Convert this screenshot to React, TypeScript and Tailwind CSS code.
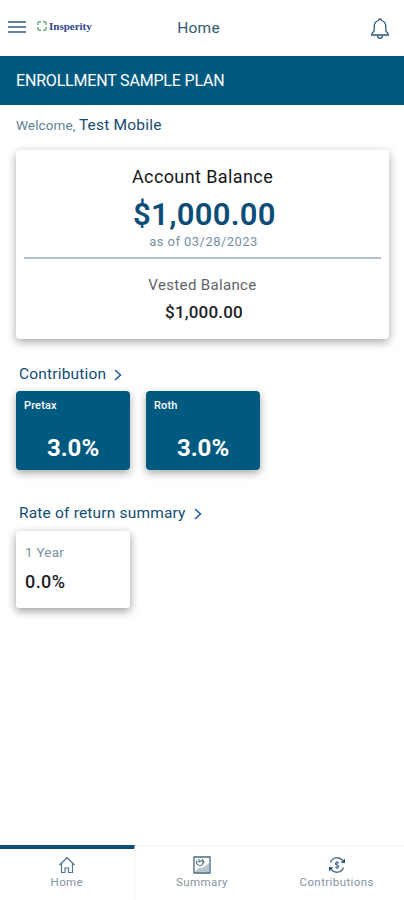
import type { ReactNode } from "react";

type Tab = {
  label: string;
  icon: ReactNode;
  active?: boolean;
};

const contributions = [
  { label: "Pretax", value: "3.0%" },
  { label: "Roth", value: "3.0%" },
];

const tabs: Tab[] = [
  { label: "Home", icon: <HomeIcon />, active: true },
  { label: "Summary", icon: <SummaryIcon /> },
  { label: "Contributions", icon: <ContributionsIcon /> },
];

function HomeIcon() {
  return (
    <svg width="18" height="18" viewBox="0 0 18 18" fill="none" stroke="#53778f" strokeWidth="1.2" aria-hidden="true">
      <path d="M1.500 9 9 1.700 16.500 9M3.500 7.500v9H7v-4.500h3.500v4.500h4v-9" />
    </svg>
  );
}

function SummaryIcon() {
  return (
    <svg width="18" height="18" viewBox="0 0 18 18" fill="none" stroke="#47687e" strokeWidth="1.3" aria-hidden="true">
      <path d="M2 15.500 7 11.500l3 .5 6-5v9.500H2z" fill="#b7c5cf" stroke="none" />
      <path d="M1 1h16v16H1z" />
      <path d="M4 4.500A3.300 3.300 0 1 0 9 3.500M6 3v3l3.500-1.500M9 3.500l2 2.500-2 2.500" strokeWidth="1.1" />
    </svg>
  );
}

function ContributionsIcon() {
  return (
    <svg width="18" height="18" viewBox="0 0 18 18" fill="none" stroke="#4d7087" strokeWidth="1.4" aria-hidden="true">
      <path d="M2.500 6.500A7 7 0 0 1 14.700 4.500M15.500 11.500A7 7 0 0 1 3.300 13.500" />
      <path d="m12.500 6.500 4.500.500V2.700zM5.500 11.500 1 11v4.300z" fill="#234d70" stroke="none" />
      <path d="M10.800 7C9.500 6 7.400 6.300 7.400 7.700c0 1.500 3.400 1 3.400 2.800 0 1.400-2.300 1.600-3.600.6M9 5v8" strokeWidth="1.1" />
    </svg>
  );
}

function BellIcon() {
  return (
    <svg width="20" height="22" viewBox="0 0 20 22" fill="none" stroke="#2d5876" strokeWidth="1.3" strokeLinejoin="round" aria-hidden="true">
      <path d="M8.500 2.500a1.500 1.500 0 0 1 3 0c2.800.8 4.300 3 4.300 6v4c0 1.500 2.700 2.300 2.700 4.500h-17c0-2.200 2.700-3 2.700-4.500v-4c0-3 1.500-5.200 4.300-6z" />
      <path d="M7.500 17.500a2.500 2.800 0 0 0 5 0" />
    </svg>
  );
}

function SectionLink({ children }: { children: string }) {
  return (
    <a href="#" className="ml-[19px] flex h-5 w-fit items-center gap-2 text-[15.500px] tracking-[0.18px] text-[#124c73]">
      {children}
      <svg width="8" height="12" viewBox="0 0 8 12" fill="none" stroke="#265ca1" strokeWidth="1.6" aria-hidden="true">
        <path d="m1 1 5.500 5L1 11" />
      </svg>
    </a>
  );
}

export default function App() {
  return (
    <div className="flex h-screen flex-col overflow-hidden bg-white font-[Roboto,sans-serif]">
      <header className="grid h-14 shrink-0 grid-cols-[1fr_auto_1fr] items-center pr-[14px] pl-2">
        <div className="flex items-center gap-[11px] pb-[5px]">
          <button type="button" aria-label="Menu" className="flex w-[18px] flex-col gap-[3px] pt-[3px]">
            <span className="h-[2px] bg-[#64849a]" />
            <span className="h-[2px] bg-[#64849a]" />
            <span className="h-[2px] bg-[#64849a]" />
          </button>
          <div className="flex items-center gap-[2px]">
            <svg width="10" height="10" viewBox="0 0 10 10" fill="none" stroke="#6caf83" strokeWidth="1.5" aria-hidden="true">
              <path d="M4 .8H2L.8 2v2M6 .8h2L9.200 2v2M4 9.200H2L.8 8V6M6 9.200h2L9.200 8V6" />
            </svg>
            <span className="font-['Liberation_Serif',serif] text-[11px] leading-3 font-bold text-[#30458c]">Insperity</span>
          </div>
        </div>
        <h1 className="mr-px pt-px text-[15.500px] tracking-[0.25px] text-[#315970]">Home</h1>
        <button type="button" aria-label="Notifications" className="justify-self-end pt-px">
          <BellIcon />
        </button>
      </header>

      <div className="flex h-[49px] shrink-0 items-center bg-[#005a80] px-4 pt-px text-base tracking-[-0.18px] text-white">
        ENROLLMENT SAMPLE PLAN
      </div>

      <main className="flex-1">
        <p className="mt-[10px] ml-4 h-5 text-[13.500px] leading-5 tracking-[0.1px] text-[#607f96]">
          Welcome, <span className="text-[15.500px] tracking-[0.2px] text-[#154b70]">Test Mobile</span>
        </p>

        <section className="mr-[15px] ml-4 mt-[15px] flex h-[189px] flex-col items-center rounded-[4px] bg-white px-2 pt-[17px] shadow-[0_3px_10px_rgba(0,0,0,0.35)]">
          <h2 className="text-[18px] leading-5 tracking-[0.4px] text-[#151719]">Account Balance</h2>
          <p className="mt-[10px] ml-1 text-[31px] leading-9 font-semibold tracking-[0.3px] text-[#0c4d78]">$1,000.00</p>
          <p className="ml-0.5 text-[13px] leading-[18px] tracking-[0.45px] text-[#7890a3]">as of 03/28/2023</p>
          <hr className="mt-[6px] w-full border-t-2 border-[#b5bec4]" />
          <h3 className="mt-[16px] text-[15px] leading-5 tracking-[0.35px] text-[#606469]">Vested Balance</h3>
          <p className="mt-[7px] ml-[3px] text-[17px] leading-5 font-medium tracking-[0.2px] text-[#202226]">$1,000.00</p>
        </section>

        <section className="mt-[26px]">
          <SectionLink>Contribution</SectionLink>
          <div className="mt-[6px] ml-4 flex gap-4">
            {contributions.map((item) => (
              <div key={item.label} className="h-[79px] w-[114px] rounded-[4px] bg-[#005a80] text-white shadow-[0_3px_9px_rgba(0,0,0,0.35)]">
                <p className="px-2 pt-[7px] text-[11px] leading-4 font-medium tracking-[0.15px]">{item.label}</p>
                <p className="mt-[19px] text-center text-2xl leading-[30px] font-bold">{item.value}</p>
              </div>
            ))}
          </div>
        </section>

        <section className="mt-[34px]">
          <SectionLink>Rate of return summary</SectionLink>
          <div className="mt-[7px] ml-4 h-[77px] w-[114px] rounded-[3px] bg-white px-[9px] pt-[11px] shadow-[0_3px_10px_rgba(0,0,0,0.4)]">
            <p className="text-[13.500px] leading-5 tracking-[0.25px] text-[#7890a2]">1 Year</p>
            <p className="mt-[10px] text-[18px] leading-5 font-medium tracking-[0.4px] text-[#202226]">0.0%</p>
          </div>
        </section>
      </main>

      <nav className="grid h-[55px] shrink-0 grid-cols-3">
        {tabs.map((tab) => (
          <a
            key={tab.label}
            href="#"
            className={`flex flex-col items-center text-[11.500px] leading-4 tracking-[0.4px] text-[#8494a2] ${
              tab.active ? "border-t-4 border-r border-t-[#0d4d76] border-r-[#f4f4f6] pt-[7px]" : "border-t border-[#f1f2f4] pt-[10px]"
            }`}
          >
            {tab.icon}
            {tab.label}
          </a>
        ))}
      </nav>
    </div>
  );
}
